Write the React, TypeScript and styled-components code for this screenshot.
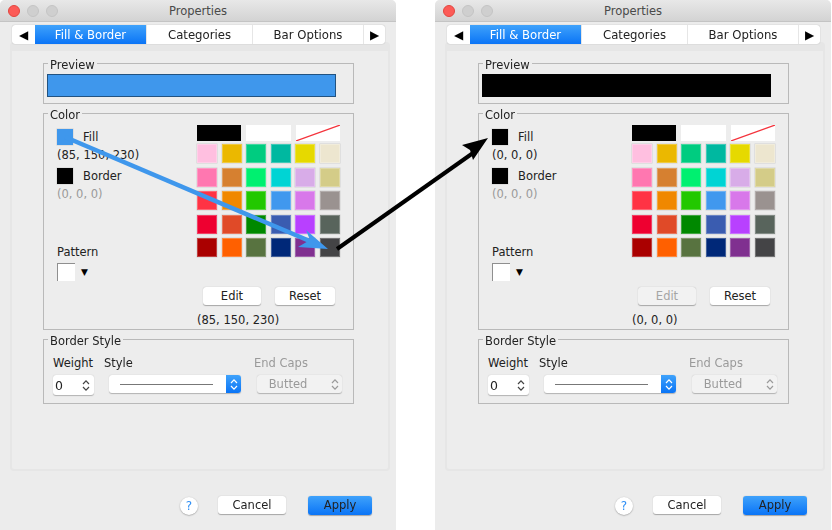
import React from 'react';
import styled, { createGlobalStyle } from 'styled-components';

const GlobalStyle = createGlobalStyle`
  html, body { margin: 0; padding: 0; background: #fff; }
  body { font-family: "DejaVu Sans", "Liberation Sans", sans-serif; font-size: 11.5px; color: #222; }
`;

const palette = [
  ['#ffbfe0', '#ebb800', '#00cc80', '#00b8a0', '#e6d900', '#ede6cf'],
  ['#ff77b0', '#d68030', '#00f070', '#00d4d4', '#d8ace8', '#d4cc88'],
  ['#ff3344', '#f08800', '#22c800', '#4098ee', '#d878ea', '#9a9290'],
  ['#ee0030', '#e04a28', '#008800', '#3a5cb0', '#b840ff', '#58645c'],
  ['#aa0000', '#ff6000', '#587340', '#002878', '#803090', '#444446'],
];

// the reference is a slightly soft, scaled-down capture
const Page = styled.div`
  position: relative;
  width: 832px;
  height: 530px;
  overflow: hidden;
  display: flex;
  gap: 39px;
  filter: blur(0.35px);
`;

const Overlay = styled.svg`
  position: absolute;
  left: 0;
  top: 0;
  pointer-events: none;
`;

const Window = styled.div`
  width: 396px;
  height: 530px;
  background: #ececec;
  display: flex;
  flex-direction: column;
  border-radius: 5px 5px 0 0;
  overflow: hidden;
`;

const TitleBar = styled.div`
  height: 21px;
  flex: none;
  display: flex;
  align-items: center;
  justify-content: center;
  position: relative;
  background: linear-gradient(#e8e8e8, #d3d3d3);
  border-bottom: 1px solid #c4c4c4;
  color: #4a4a4a;
  font-size: 11.5px;
`;

const Lights = styled.div`
  position: absolute;
  left: 8px;
  top: 5px;
  display: flex;
  gap: 7px;
`;

const Light = styled.span<{ $active?: boolean }>`
  width: 12px;
  height: 12px;
  border-radius: 50%;
  background: ${({ $active }) => ($active ? '#fc5b57' : '#cfcfcf')};
  border: 1px solid ${({ $active }) => ($active ? '#e2463f' : '#c4c4c4')};
  box-sizing: border-box;
`;

const Body = styled.div`
  flex: 1;
  padding: 3px 6px 0 10px;
  display: flex;
  flex-direction: column;
`;

const TabBar = styled.div`
  margin: 0 0 0 2px;
  width: 373px;
  height: 19px;
  flex: none;
  display: flex;
  background: #fff;
  border-radius: 3px;
  box-shadow: 0 0 1px rgba(0, 0, 0, 0.35);
  position: relative;
  z-index: 1;
  overflow: hidden;
`;

const ScrollTab = styled.div<{ $w: number }>`
  width: ${({ $w }) => $w}px;
  flex: none;
  display: flex;
  align-items: center;
  justify-content: center;
  color: #000;
  font-size: 12px;
`;

const Tab = styled.div<{ $active?: boolean; $w: number }>`
  width: ${({ $w }) => $w}px;
  flex: none;
  display: flex;
  align-items: center;
  justify-content: center;
  color: ${({ $active }) => ($active ? '#fff' : '#222')};
  background: ${({ $active }) => ($active ? 'linear-gradient(#3fa2fb, #0a74f6)' : '#fff')};
  border-right: 1px solid #e6e6e6;
  box-sizing: border-box;
  font-size: 11.7px;
`;

const Panel = styled.div`
  margin-top: -2px;
  height: 429px;
  flex: none;
  background: #ededed;
  border: 2px solid #e6e6e6;
  border-top-width: 9px;
  border-radius: 4px;
  box-sizing: border-box;
  padding: 6px 0 0 31px;
  display: flex;
  flex-direction: column;
  gap: 3px;
`;

const Group = styled.fieldset<{ $h: number }>`
  margin: 0;
  width: 311px;
  height: ${({ $h }) => $h}px;
  flex: none;
  box-sizing: border-box;
  padding: 0;
  border: 1px solid #b9b9b9;
  background: #ededed;
  min-width: 0;
  position: relative;
`;

const Legend = styled.legend`
  position: relative;
  top: 2px;
  margin-left: 4px;
  padding: 0 2px;
  font-size: 11.5px;
  line-height: 13px;
  color: #222;
`;

const PreviewBar = styled.div<{ $color: string }>`
  margin: 4px 0 0 3px;
  width: 289px;
  height: 23px;
  box-sizing: border-box;
  background: ${({ $color }) => $color};
  border: 1px solid rgba(0, 0, 0, 0.45);
`;

const ColorBody = styled.div`
  display: flex;
  height: 205px;
`;

const LeftColumn = styled.div`
  width: 153px;
  padding: 9px 0 0 13px;
  box-sizing: border-box;
  display: flex;
  flex-direction: column;
`;

const SwatchRow = styled.div`
  display: flex;
  align-items: center;
  gap: 10px;
  height: 16px;
`;

const Swatch = styled.div<{ $color: string }>`
  width: 16px;
  height: 16px;
  background: ${({ $color }) => $color};
  box-shadow: 0 0 0 0.5px #cfcfcf;
`;

const Rgb = styled.div<{ $muted?: boolean }>`
  margin: 3px 0 6px;
  height: 14px;
  line-height: 14px;
  white-space: nowrap;
  color: ${({ $muted }) => ($muted ? '#9a9a9a' : '#222')};
`;

const PatternLabel = styled.div`
  margin-top: 38px;
  line-height: 14px;
`;

const PatternRow = styled.div`
  margin-top: 4px;
  display: flex;
  align-items: center;
  gap: 6px;
`;

const PatternBox = styled.div`
  width: 18px;
  height: 18px;
  background: #fff;
  box-sizing: border-box;
  border-left: 1px solid #8f8f8f;
  border-top: 1px solid #8f8f8f;
`;

const PatternCaret = styled.span`
  font-size: 9px;
  color: #000;
`;

const RightColumn = styled.div`
  width: 143px;
  padding-top: 5px;
  display: flex;
  flex-direction: column;
`;

const WideRow = styled.div`
  display: flex;
  gap: 5px;
  margin-bottom: 3px;
`;

const WideSwatch = styled.div<{ $color: string }>`
  position: relative;
  width: 44.3px;
  height: 16px;
  background: ${({ $color }) => $color};
  overflow: hidden;
`;

const PaletteGrid = styled.div`
  display: grid;
  grid-template-columns: repeat(6, 20px);
  grid-auto-rows: 19px;
  column-gap: 4.6px;
  row-gap: 4.5px;
`;

const PaletteCell = styled.div<{ $color: string }>`
  background: ${({ $color }) => $color};
  box-shadow: inset 0 0 0 1px rgba(255, 255, 255, 0.25), 0 0 0 0.5px rgba(0, 0, 0, 0.12);
`;

const EditRow = styled.div`
  margin: 30px 0 0 6px;
  display: flex;
  gap: 14px;
`;

const MacButton = styled.div<{ $w: number; $disabled?: boolean; $primary?: boolean }>`
  width: ${({ $w }) => $w}px;
  height: ${({ $primary }) => ($primary ? 19 : 18)}px;
  border-radius: 3px;
  display: flex;
  align-items: center;
  justify-content: center;
  font-size: 11.5px;
  background: ${({ $primary, $disabled }) =>
    $primary ? 'linear-gradient(#3fa2fb, #0a74f6)' : $disabled ? '#f2f2f2' : '#fff'};
  color: ${({ $disabled }) => ($disabled ? '#a5a5a5' : '#222')};
  box-shadow: 0 0.5px 1px rgba(0, 0, 0, 0.3);
`;

const EditCaption = styled.div`
  margin-top: 8px;
  line-height: 14px;
  white-space: nowrap;
`;

const BorderBody = styled.div`
  display: flex;
  padding: 10px 0 0 9px;
`;

const Field = styled.div<{ $w: number; $indent?: number }>`
  width: ${({ $w }) => $w}px;
  display: flex;
  flex-direction: column;
  gap: 5px;
  & > :last-child {
    margin-left: ${({ $indent }) => $indent ?? 0}px;
  }
`;

const FieldLabel = styled.div<{ $muted?: boolean }>`
  line-height: 14px;
  white-space: nowrap;
  color: ${({ $muted }) => ($muted ? '#9a9a9a' : '#222')};
`;

const Spinner = styled.div`
  width: 41px;
  height: 20px;
  display: flex;
  background: #fff;
  border-radius: 3px;
  box-shadow: 0 0.5px 1px rgba(0, 0, 0, 0.25);
  overflow: hidden;
`;

const SpinnerValue = styled.div`
  width: 25px;
  line-height: 21px;
  padding-left: 2px;
  box-sizing: border-box;
  font-size: 12.5px;
`;

const Stepper = styled.div`
  flex: 1;
  display: flex;
  align-items: center;
  justify-content: center;
  color: #444;
`;

const SelectBox = styled.div<{ $disabled?: boolean; $w: number }>`
  width: ${({ $w }) => $w}px;
  height: 18px;
  display: flex;
  align-items: center;
  border-radius: 3px;
  overflow: hidden;
  background: ${({ $disabled }) => ($disabled ? '#f2f2f2' : '#fff')};
  color: #9a9a9a;
  box-shadow: 0 0.5px 1px rgba(0, 0, 0, 0.25);
`;

const SelectLine = styled.div`
  flex: 1;
  margin: 0 13px 0 11px;
  height: 1px;
  background: #777;
`;

const SelectCap = styled.div`
  width: 15px;
  height: 100%;
  display: flex;
  align-items: center;
  justify-content: center;
  background: linear-gradient(#3fa2fb, #0a74f6);
  color: #fff;
`;

const SelectText = styled.div`
  flex: 1;
  text-align: center;
  padding-right: 8px;
`;

const SelectChevron = styled.div`
  width: 15px;
  display: flex;
  align-items: center;
  justify-content: center;
`;

const Footer = styled.div`
  margin-top: 24px;
  padding-left: 170px;
  display: flex;
  align-items: center;
`;

const HelpButton = styled.div`
  width: 18px;
  height: 18px;
  border-radius: 50%;
  background: #fff;
  color: #2f8ff5;
  font-size: 12px;
  display: flex;
  align-items: center;
  justify-content: center;
  box-shadow: 0 0.5px 1.5px rgba(0, 0, 0, 0.4);
  margin: 2px 20px 0 0;
`;

const ApplySpacer = styled.div`
  width: 22px;
`;

const Chevrons: React.FC = () => (
  <svg width="8" height="13" viewBox="0 0 8 13" fill="none" stroke="currentColor" strokeWidth="1.2">
    <path d="M1 5 4 1.8 7 5M1 8 4 11.2 7 8" />
  </svg>
);

interface PropertiesProps {
  preview: string;
  fill: string;
  fillText: string;
  editDisabled?: boolean;
}

const PropertiesWindow: React.FC<PropertiesProps> = ({ preview, fill, fillText, editDisabled }) => (
  <Window>
    <TitleBar>
      <Lights>
        <Light $active />
        <Light />
        <Light />
      </Lights>
      Properties
    </TitleBar>
    <Body>
      <TabBar>
        <ScrollTab $w={23}>◀</ScrollTab>
        <Tab $active $w={112}>Fill &amp; Border</Tab>
        <Tab $w={106}>Categories</Tab>
        <Tab $w={111}>Bar Options</Tab>
        <ScrollTab $w={21}>▶</ScrollTab>
      </TabBar>
      <Panel>
        <Group $h={47}>
          <Legend>Preview</Legend>
          <PreviewBar $color={preview} />
        </Group>
        <Group $h={223}>
          <Legend>Color</Legend>
          <ColorBody>
            <LeftColumn>
              <SwatchRow>
                <Swatch $color={fill} />
                Fill
              </SwatchRow>
              <Rgb>{fillText}</Rgb>
              <SwatchRow>
                <Swatch $color="#000" />
                Border
              </SwatchRow>
              <Rgb $muted>(0, 0, 0)</Rgb>
              <PatternLabel>Pattern</PatternLabel>
              <PatternRow>
                <PatternBox />
                <PatternCaret>▼</PatternCaret>
              </PatternRow>
            </LeftColumn>
            <RightColumn>
              <WideRow>
                <WideSwatch $color="#000" />
                <WideSwatch $color="#fff" />
                <WideSwatch $color="#fff">
                  <svg width="44" height="16" viewBox="0 0 44 16">
                    <line x1="0" y1="16" x2="44" y2="0" stroke="#f4333c" strokeWidth="1.2" />
                  </svg>
                </WideSwatch>
              </WideRow>
              <PaletteGrid>
                {palette.flat().map((c, i) => (
                  <PaletteCell key={i} $color={c} />
                ))}
              </PaletteGrid>
              <EditRow>
                <MacButton $w={58} $disabled={editDisabled}>Edit</MacButton>
                <MacButton $w={60}>Reset</MacButton>
              </EditRow>
              <EditCaption>{fillText}</EditCaption>
            </RightColumn>
          </ColorBody>
        </Group>
        <Group $h={71}>
          <Legend>Border Style</Legend>
          <BorderBody>
            <Field $w={51}>
              <FieldLabel>Weight</FieldLabel>
              <Spinner>
                <SpinnerValue>0</SpinnerValue>
                <Stepper><Chevrons /></Stepper>
              </Spinner>
            </Field>
            <Field $w={150} $indent={5}>
              <FieldLabel>Style</FieldLabel>
              <SelectBox $w={132}>
                <SelectLine />
                <SelectCap><Chevrons /></SelectCap>
              </SelectBox>
            </Field>
            <Field $w={90} $indent={3}>
              <FieldLabel $muted>End Caps</FieldLabel>
              <SelectBox $w={85} $disabled>
                <SelectText>Butted</SelectText>
                <SelectChevron><Chevrons /></SelectChevron>
              </SelectBox>
            </Field>
          </BorderBody>
        </Group>
      </Panel>
      <Footer>
        <HelpButton>?</HelpButton>
        <MacButton $w={68}>Cancel</MacButton>
        <ApplySpacer />
        <MacButton $w={64} $primary>Apply</MacButton>
      </Footer>
    </Body>
  </Window>
);

const App: React.FC = () => (
  <Page>
    <GlobalStyle />
    <PropertiesWindow preview="#3f97ec" fill="#3f97ec" fillText="(85, 150, 230)" />
    <PropertiesWindow preview="#000" fill="#000" fillText="(0, 0, 0)" editDisabled />
    <Overlay width="832" height="530" viewBox="0 0 832 530">
      <path d="M337 249 473 153" stroke="#000" strokeWidth="4" fill="none" />
      <path d="M488 138 462 145 470 150 473 160Z" fill="#000" />
      <path d="M65 137 312 242" stroke="#3f97ec" strokeWidth="4.5" fill="none" />
      <path d="M328 249 298 247 310 240 306 230Z" fill="#3f97ec" />
    </Overlay>
  </Page>
);

export default App;
